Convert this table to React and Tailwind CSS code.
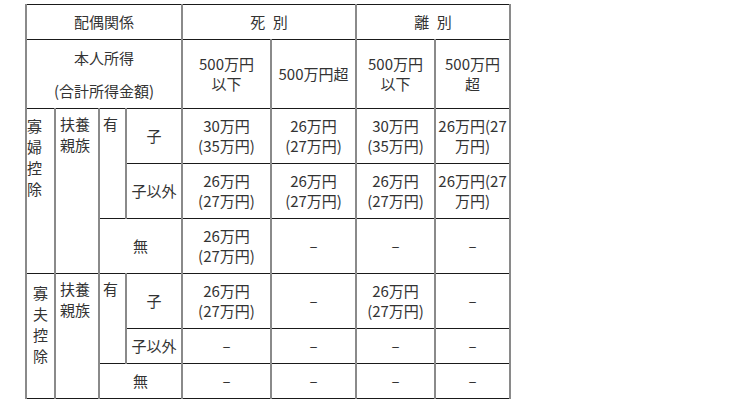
import React from "react";

const cell =
  "border-x-2 border-x-[#8a8a8a] border-y border-y-[#1a1a1a] p-0 align-middle text-center";

const Money = ({ a, b }) => (
  <div className="leading-[20px]">
    {a}
    <br />
    {b}
  </div>
);

const Dash = () => <div className="leading-[20px]">–</div>;

const App = () => {
  return (
    <div className="w-[742px] h-[418px] bg-white pt-[4px] pl-[25px]">
      <table
        className="border-collapse table-fixed text-[15px] text-[#333] w-[484px]"
        style={{ fontFamily: '"Noto Sans CJK JP", "Noto Sans", sans-serif' }}
      >
        <colgroup>
          <col className="w-[29px]" />
          <col className="w-[44px]" />
          <col className="w-[27px]" />
          <col className="w-[56px]" />
          <col className="w-[89px]" />
          <col className="w-[85px]" />
          <col className="w-[79px]" />
          <col className="w-[75px]" />
        </colgroup>
        <tbody>
          <tr className="h-[35px]">
            <td className={cell} colSpan={4}>配偶関係</td>
            <td className={cell} colSpan={2}>死{"\u2002"}別</td>
            <td className={cell} colSpan={2}>離{"\u2002"}別</td>
          </tr>
          <tr className="h-[69px]">
            <td className={cell} colSpan={4}>
              <div className="leading-[33px]">本人所得</div>
              <div className="leading-[33px]">(合計所得金額)</div>
            </td>
            <td className={cell}>
              <Money a="500万円" b="以下" />
            </td>
            <td className={cell}>500万円超</td>
            <td className={cell}>
              <Money a="500万円" b="以下" />
            </td>
            <td className={cell}>
              <Money a="500万円" b="超" />
            </td>
          </tr>

          {/* 寡婦控除 */}
          <tr className="h-[55px]">
            <td className={cell + " !align-top"} rowSpan={3}>
              <div className="pt-[6px] text-left leading-[21px]">
                寡<br />婦<br />控<br />除
              </div>
            </td>
            <td className={cell + " !align-top !text-left"} rowSpan={3}>
              <div className="pl-[4px] pt-[4px] leading-[21px]">
                扶養
                <br />
                親族
              </div>
            </td>
            <td className={cell + " !align-top !text-left"} rowSpan={2}>
              <div className="pl-[3px] pt-[4px] leading-[21px]">有</div>
            </td>
            <td className={cell}>子</td>
            <td className={cell}>
              <Money a="30万円" b="(35万円)" />
            </td>
            <td className={cell}>
              <Money a="26万円" b="(27万円)" />
            </td>
            <td className={cell}>
              <Money a="30万円" b="(35万円)" />
            </td>
            <td className={cell}>
              <Money a="26万円(27" b="万円)" />
            </td>
          </tr>
          <tr className="h-[55px]">
            <td className={cell}>子以外</td>
            <td className={cell}>
              <Money a="26万円" b="(27万円)" />
            </td>
            <td className={cell}>
              <Money a="26万円" b="(27万円)" />
            </td>
            <td className={cell}>
              <Money a="26万円" b="(27万円)" />
            </td>
            <td className={cell}>
              <Money a="26万円(27" b="万円)" />
            </td>
          </tr>
          <tr className="h-[55px]">
            <td className={cell} colSpan={2}>無</td>
            <td className={cell}>
              <Money a="26万円" b="(27万円)" />
            </td>
            <td className={cell}>
              <Dash />
            </td>
            <td className={cell}>
              <Dash />
            </td>
            <td className={cell}>
              <Dash />
            </td>
          </tr>

          {/* 寡夫控除 */}
          <tr className="h-[55px]">
            <td className={cell + " !align-top"} rowSpan={3}>
              <div className="pt-[8px] leading-[21px]">
                寡<br />夫<br />控<br />除
              </div>
            </td>
            <td className={cell + " !align-top !text-left"} rowSpan={3}>
              <div className="pl-[4px] pt-[4px] leading-[21px]">
                扶養
                <br />
                親族
              </div>
            </td>
            <td className={cell + " !align-top !text-left"} rowSpan={2}>
              <div className="pl-[3px] pt-[4px] leading-[21px]">有</div>
            </td>
            <td className={cell}>子</td>
            <td className={cell}>
              <Money a="26万円" b="(27万円)" />
            </td>
            <td className={cell}>
              <Dash />
            </td>
            <td className={cell}>
              <Money a="26万円" b="(27万円)" />
            </td>
            <td className={cell}>
              <Dash />
            </td>
          </tr>
          <tr className="h-[35px]">
            <td className={cell}>子以外</td>
            <td className={cell}>
              <Dash />
            </td>
            <td className={cell}>
              <Dash />
            </td>
            <td className={cell}>
              <Dash />
            </td>
            <td className={cell}>
              <Dash />
            </td>
          </tr>
          <tr className="h-[35px]">
            <td className={cell} colSpan={2}>無</td>
            <td className={cell}>
              <Dash />
            </td>
            <td className={cell}>
              <Dash />
            </td>
            <td className={cell}>
              <Dash />
            </td>
            <td className={cell}>
              <Dash />
            </td>
          </tr>
        </tbody>
      </table>
    </div>
  );
};

export default App;
